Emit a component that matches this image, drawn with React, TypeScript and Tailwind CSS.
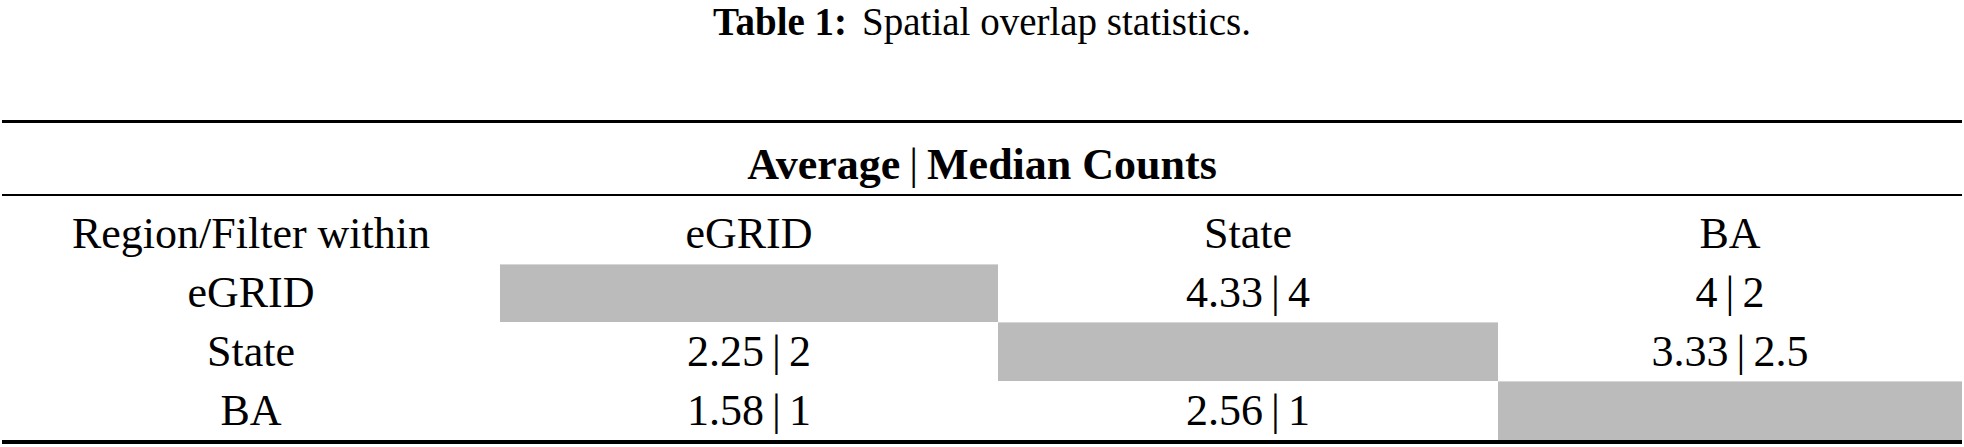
const rows = [
  { label: 'eGRID', cells: [null, '4.33 | 4', '4 | 2'], h: 'h-[58px]' },
  { label: 'State', cells: ['2.25 | 2', null, '3.33 | 2.5'], h: 'h-[59px]' },
  { label: 'BA', cells: ['1.58 | 1', '2.56 | 1', null], h: 'h-[59px]' },
]

const cols = ['eGRID', 'State', 'BA']

const Pair = ({ text }: { text: string }) => {
  const [a, b] = text.split(' | ')
  return (
    <span className="whitespace-nowrap">
      {a}
      <span className="mx-[8px]">|</span>
      {b}
    </span>
  )
}

export default function App() {
  return (
    <div className="w-[1964px] h-[447px] bg-white text-black font-['Liberation_Serif',serif] overflow-hidden">
      {/* Caption */}
      <div className="h-[42px] flex items-center justify-center text-[39px] leading-none">
        <span className="font-bold">Table 1:</span>
        <span className="ml-[15px]">Spatial overlap statistics.</span>
      </div>

      {/* Table */}
      <div className="mt-[78px] mx-[2px] border-t-[3px] border-b-[4px] border-black text-[44px] leading-none">
        <div className="h-[73px] flex items-center justify-center pt-[12px] border-b-[2px] border-black font-bold">
          Average<span className="mx-[9px] font-normal">|</span>Median Counts
        </div>

        <div className="grid grid-cols-[498px_498px_500px_1fr]">
          <div className="h-[68px] flex items-center justify-center pt-[8px]">Region/Filter within</div>
          {cols.map((c) => (
            <div key={c} className="h-[68px] flex items-center justify-center pt-[8px]">
              {c}
            </div>
          ))}

          {rows.map((r) => (
            <div key={r.label} className="contents">
              <div className={`flex items-center justify-center ${r.h}`}>{r.label}</div>
              {r.cells.map((cell, j) =>
                cell === null ? (
                  <div key={j} className={`bg-[#bbbbbb] border-t border-[#d6d6d6] ${r.h}`} />
                ) : (
                  <div key={j} className={`flex items-center justify-center ${r.h}`}>
                    <Pair text={cell} />
                  </div>
                )
              )}
            </div>
          ))}
        </div>
      </div>
    </div>
  )
}
